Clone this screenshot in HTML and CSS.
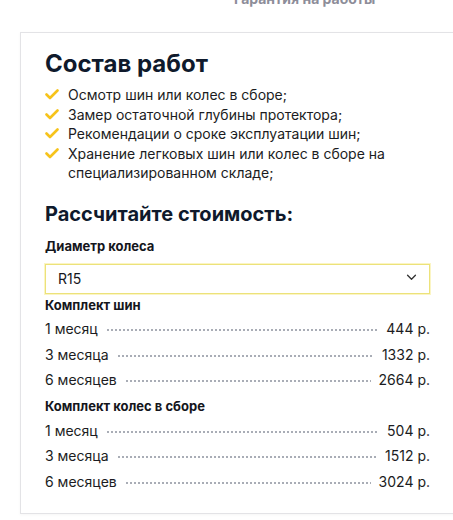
FILE: index.html
```html
<!DOCTYPE html>
<html lang="ru">
<head>
<meta charset="utf-8">
<link rel="stylesheet" href="styles.css">
</head>
<body>
<div class="tabs"><span class="tab">Гарантия на работы</span></div>
<section class="card">
  <h2 class="title">Состав работ</h2>
  <ul class="checks">
    <li><svg class="ck" viewBox="0 0 14 11"><path d="M1.5 5.5 L5 9 L12.5 1.5" fill="none" stroke="#f6c31b" stroke-width="2.6" stroke-linecap="round" stroke-linejoin="round"/></svg><span>Осмотр шин или колес в сборе;</span></li>
    <li><svg class="ck" viewBox="0 0 14 11"><path d="M1.5 5.5 L5 9 L12.5 1.5" fill="none" stroke="#f6c31b" stroke-width="2.6" stroke-linecap="round" stroke-linejoin="round"/></svg><span>Замер остаточной глубины протектора;</span></li>
    <li><svg class="ck" viewBox="0 0 14 11"><path d="M1.5 5.5 L5 9 L12.5 1.5" fill="none" stroke="#f6c31b" stroke-width="2.6" stroke-linecap="round" stroke-linejoin="round"/></svg><span>Рекомендации о сроке эксплуатации шин;</span></li>
    <li><svg class="ck" viewBox="0 0 14 11"><path d="M1.5 5.5 L5 9 L12.5 1.5" fill="none" stroke="#f6c31b" stroke-width="2.6" stroke-linecap="round" stroke-linejoin="round"/></svg><span>Хранение легковых шин или колес в сборе на специализированном складе;</span></li>
  </ul>
  <h3 class="subtitle">Рассчитайте стоимость:</h3>
  <div class="label">Диаметр колеса</div>
  <div class="select">
    <span>R15</span>
    <svg class="chev" viewBox="0 0 12 8"><path d="M1.5 1.5 L6 6 L10.5 1.5" fill="none" stroke="#333" stroke-width="1.5" stroke-linecap="round" stroke-linejoin="round"/></svg>
  </div>
  <div class="group">Комплект шин</div>
  <div class="row"><span class="name">1 месяц</span><span class="dots"></span><span class="price">444 р.</span></div>
  <div class="row"><span class="name">3 месяца</span><span class="dots"></span><span class="price">1332 р.</span></div>
  <div class="row"><span class="name">6 месяцев</span><span class="dots"></span><span class="price">2664 р.</span></div>
  <div class="group group2">Комплект колес в сборе</div>
  <div class="row"><span class="name">1 месяц</span><span class="dots"></span><span class="price">504 р.</span></div>
  <div class="row"><span class="name">3 месяца</span><span class="dots"></span><span class="price">1512 р.</span></div>
  <div class="row"><span class="name">6 месяцев</span><span class="dots"></span><span class="price">3024 р.</span></div>
</section>
</body>
</html>
```
FILE: styles.css
```css
html, body {
  margin: 0;
  padding: 0;
  overflow: hidden;
  background: #fff;
}
body {
  font-family: Inter, "Noto Sans", "Liberation Sans", sans-serif;
  color: #15161c;
  width: 453px;
  height: 520px;
}
.tabs {
  height: 32px;
  display: flex;
  justify-content: flex-start;
  padding-left: 234px;
}
.tab {
  font-size: 14px;
  font-weight: 700;
  color: #8d8d99;
  line-height: 14px;
  margin-top: -8px;
}
.card {
  margin-left: 20px;
  width: 436px;
  box-sizing: border-box;
  height: 482px;
  border: 1px solid #e3e3e6;
  padding: 16px 25px 0 24px;
  box-shadow: 0 1px 3px rgba(0,0,0,0.04);
}
.title {
  margin: 0;
  font-size: 24px;
  font-weight: 700;
  line-height: 30px;
  color: #0f1a2c;
  letter-spacing: 0;
}
.checks {
  list-style: none;
  margin: 6px 0 0;
  padding: 0;
}
.checks li {
  display: flex;
  align-items: flex-start;
  font-size: 14px;
  line-height: 19.5px;
  color: #1b1c22;
}
.ck {
  width: 14px;
  height: 11px;
  flex: none;
  margin: 4px 9px 0 0;
}
.checks li span {
  max-width: 340px;
}
.subtitle {
  margin: 18px 0 0;
  font-size: 20px;
  font-weight: 700;
  line-height: 26px;
  color: #0f1a2c;
}
.label {
  margin-top: 10px;
  font-size: 13px;
  font-weight: 700;
  line-height: 18px;
  color: #15161c;
}
.select {
  margin-top: 9px;
  height: 30px;
  box-sizing: border-box;
  border: 1px solid #ece27a;
  box-shadow: 0 0 0 1px #fbf5c4;
  display: flex;
  align-items: center;
  justify-content: space-between;
  padding: 0 12px 0 12px;
  font-size: 14px;
}
.chev {
  width: 11px;
  height: 7px;
  margin-top: -2px;
}
.group {
  margin-top: 2px;
  font-size: 13px;
  font-weight: 700;
  line-height: 18px;
  color: #15161c;
}
.group2 {
  margin-top: 7px;
}
.row {
  display: flex;
  align-items: baseline;
  font-size: 14px;
  line-height: 20px;
  margin-top: 5.5px;
  color: #1b1c22;
}
.dots {
  flex: 1;
  height: 2px;
  margin: 0 8px 0 8px;
  background-image: radial-gradient(circle, #a9adb6 0.75px, transparent 1.1px);
  background-size: 4px 2px;
  background-repeat: repeat-x;
  transform: translateY(-3px);
}
.price {
  text-align: right;
}
```
